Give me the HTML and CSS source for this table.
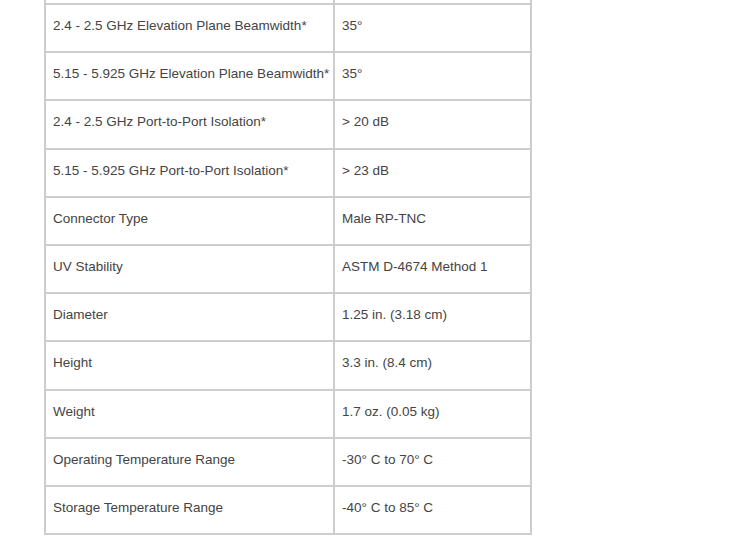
FILE: index.html
```html
<!DOCTYPE html>
<html>
<head>
<meta charset="utf-8">
<link rel="stylesheet" href="styles.css">
</head>
<body>
<table class="specs">
  <tbody>
    <tr class="prev"><td class="label"></td><td class="value"></td></tr>
    <tr><td class="label">2.4 - 2.5 GHz Elevation Plane Beamwidth*</td><td class="value">35°</td></tr>
    <tr><td class="label">5.15 - 5.925 GHz Elevation Plane Beamwidth*</td><td class="value">35°</td></tr>
    <tr><td class="label">2.4 - 2.5 GHz Port-to-Port Isolation*</td><td class="value">&gt; 20 dB</td></tr>
    <tr><td class="label">5.15 - 5.925 GHz Port-to-Port Isolation*</td><td class="value">&gt; 23 dB</td></tr>
    <tr><td class="label">Connector Type</td><td class="value">Male RP-TNC</td></tr>
    <tr><td class="label">UV Stability</td><td class="value">ASTM D-4674 Method 1</td></tr>
    <tr><td class="label">Diameter</td><td class="value">1.25 in. (3.18 cm)</td></tr>
    <tr><td class="label">Height</td><td class="value">3.3 in. (8.4 cm)</td></tr>
    <tr><td class="label">Weight</td><td class="value">1.7 oz. (0.05 kg)</td></tr>
    <tr><td class="label">Operating Temperature Range</td><td class="value">-30° C to 70° C</td></tr>
    <tr><td class="label">Storage Temperature Range</td><td class="value">-40° C to 85° C</td></tr>
  </tbody>
</table>
</body>
</html>
```

FILE: styles.css
```css
html, body {
  margin: 0;
  padding: 0;
  background: #ffffff;
}

body {
  font-family: "Liberation Sans", Arial, sans-serif;
  font-size: 13.5px;
  color: #444444;
  overflow: hidden;
}

.specs {
  margin: -45px 0 0 44px;
  border: 1px solid #cdcdcd;
  border-spacing: 0;
  border-collapse: separate;
  width: 488px;
  table-layout: fixed;
}

.specs td {
  border: 1px solid #cdcdcd;
  height: 48.2px;
  box-sizing: border-box;
  padding: 13px 7px 18px 7px;
  vertical-align: top;
  line-height: 15px;
  white-space: nowrap;
}

.specs .prev td {
  height: 48px;
}

.specs .label {
  width: 289px;
}

.specs .value {
  width: 197px;
}
```
